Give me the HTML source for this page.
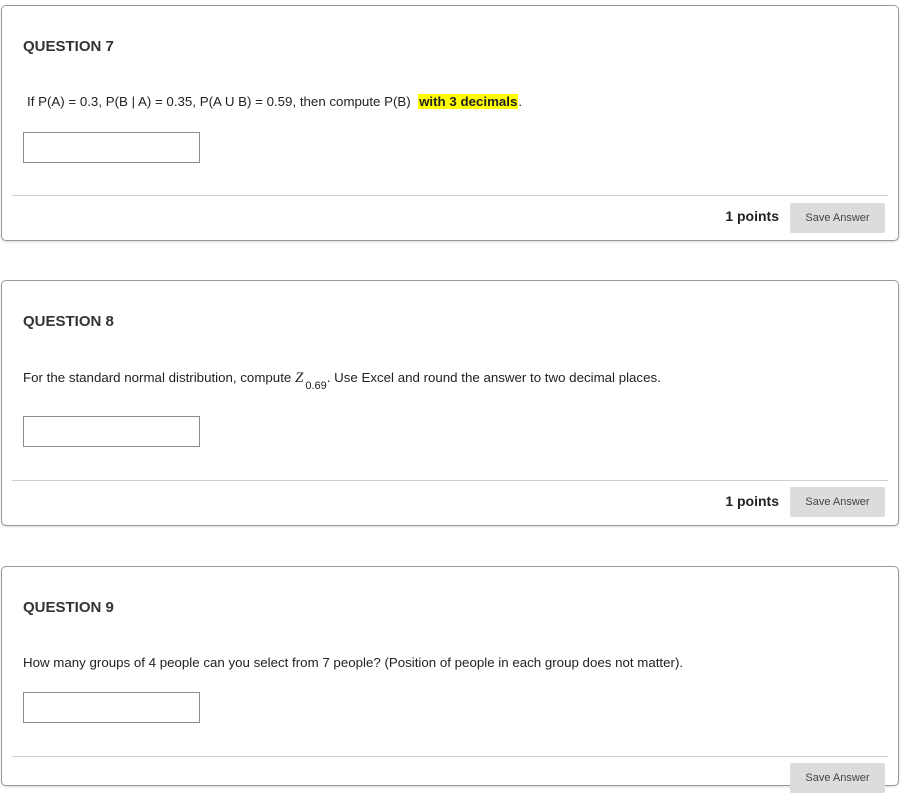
<!DOCTYPE html>
<html><head><meta charset="utf-8"><style>
*{margin:0;padding:0;box-sizing:border-box}
body{width:902px;height:769px;background:#fff;position:relative;overflow:hidden;font-family:"Liberation Sans",Arial,sans-serif;color:#111}
.card{position:absolute;left:1px;width:898px;border:1px solid #9a9a9a;border-radius:5px;background:#fff;box-shadow:0 1px 2px rgba(0,0,0,.15)}
.h{position:absolute;left:21px;font-weight:bold;font-size:15px;color:#333;letter-spacing:0}
.q{position:absolute;left:21px;font-size:13.3px;color:#222;white-space:nowrap}
.in{position:absolute;left:21px;width:177px;height:31px;border:1px solid #8d8d8d;background:#fff}
.hr{position:absolute;left:10px;width:876px;height:1px;background:#cfcfcf}
.pts{position:absolute;right:119px;font-weight:bold;font-size:14px;color:#222}
.btn{position:absolute;left:788px;width:95px;height:30px;background:#dcdcdc;border-radius:2px;font-size:11px;color:#444;text-align:center;line-height:30px}
.hl{background:#ffff00;font-weight:bold;padding:0 1px}
</style></head><body>
<div class="card" style="top:5px;height:236px">
 <div class="h" style="top:32px">QUESTION 7</div>
 <div class="q" style="top:88px;left:25px">If P(A) = 0.3, P(B | A) = 0.35, P(A U B) = 0.59, then compute P(B) &nbsp;<span class="hl">with 3 decimals</span>.</div>
 <div class="in" style="top:126px"></div>
 <div class="hr" style="top:189px"></div>
 <div class="pts" style="top:202px">1 points</div>
 <div class="btn" style="top:197px">Save Answer</div>
</div>
<div class="card" style="top:280px;height:246px">
 <div class="h" style="top:32px">QUESTION 8</div>
 <div class="q" style="top:89px">For the standard normal distribution, compute <span style="font-family:'Liberation Serif',serif;font-style:italic;font-size:15px">Z</span><sub style="font-size:11px;position:relative;top:3px;margin-left:2px">0.69</sub>. Use Excel and round the answer to two decimal places.</div>
 <div class="in" style="top:135px"></div>
 <div class="hr" style="top:199px"></div>
 <div class="pts" style="top:212px">1 points</div>
 <div class="btn" style="top:206px">Save Answer</div>
</div>
<div class="card" style="top:566px;height:220px">
 <div class="h" style="top:32px">QUESTION 9</div>
 <div class="q" style="top:88px">How many groups of 4 people can you select from 7 people? (Position of people in each group does not matter).</div>
 <div class="in" style="top:125px"></div>
 <div class="hr" style="top:189px"></div>
 <div class="btn" style="top:196px">Save Answer</div>
</div>
</body></html>
